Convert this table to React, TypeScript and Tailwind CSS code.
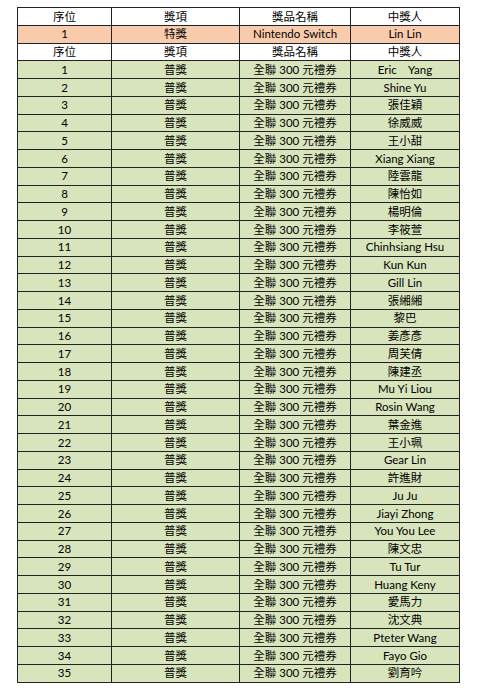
const names = [
  'Eric    Yang',
  'Shine Yu',
  '張佳穎',
  '徐威威',
  '王小甜',
  'Xiang Xiang',
  '陸雲龍',
  '陳怡如',
  '楊明倫',
  '李筱萱',
  'Chinhsiang Hsu',
  'Kun Kun',
  'Gill Lin',
  '張緗緗',
  '黎巴',
  '姜彥彥',
  '周芙倩',
  '陳建丞',
  'Mu Yi Liou',
  'Rosin Wang',
  '葉金進',
  '王小珮',
  'Gear Lin',
  '許進財',
  'Ju Ju',
  'Jiayi Zhong',
  'You You Lee',
  '陳文忠',
  'Tu Tur',
  'Huang Keny',
  '愛馬力',
  '沈文典',
  'Pteter Wang',
  'Fayo Gio',
  '劉育吟',
];

function Row({ cells, bg }: { cells: string[]; bg: string }) {
  return (
    <>
      {cells.map((c, i) => (
        <div
          key={i}
          className={`${bg} h-[17.75px] border-l border-t border-[#222] flex items-center justify-center whitespace-pre leading-none`}
        >
          {c}
        </div>
      ))}
    </>
  );
}

export default function App() {
  const header = ['序位', '獎項', '獎品名稱', '中獎人'];
  return (
    <div className="w-[479px] h-[693px] bg-white pt-[7px] pl-[17px]">
      <div
        className="grid grid-cols-[94px_128px_111px_109px] w-[443px] border-r border-b border-[#222] text-[11.5px] text-black"
        style={{ fontFamily: 'Lato, "Noto Sans CJK TC", sans-serif' }}
      >
        <Row cells={header} bg="bg-white" />
        <Row cells={['1', '特獎', 'Nintendo Switch', 'Lin Lin']} bg="bg-[#f8cbad]" />
        <Row cells={header} bg="bg-white" />
        {names.map((n, i) => (
          <Row key={i} cells={[String(i + 1), '普獎', '全聯 300 元禮券', n]} bg="bg-[#d8e4bc]" />
        ))}
      </div>
    </div>
  );
}
